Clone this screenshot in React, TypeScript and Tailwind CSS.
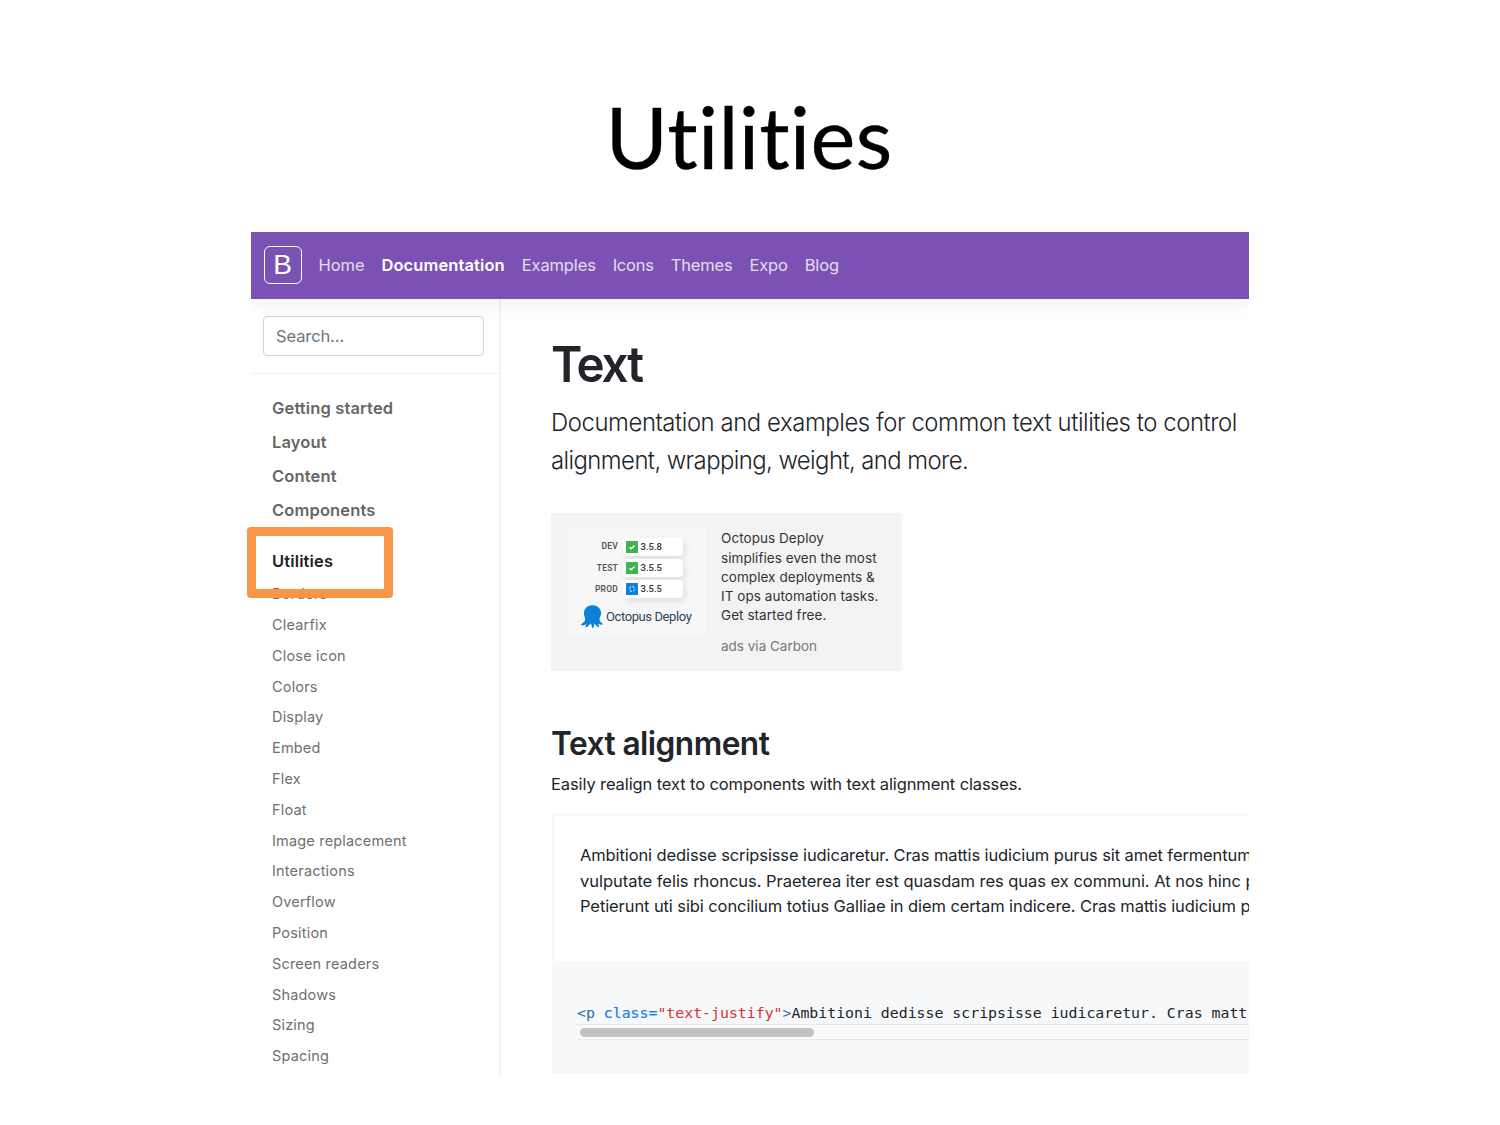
import React from "react";

const nav: [string, string][] = [
  ["Home", "text-white/80 tracking-[-0.060px]"],
  ["Documentation", "font-semibold text-white tracking-[0.100px]"],
  ["Examples", "text-white/80 tracking-[-0.135px]"],
  ["Icons", "text-white/80 tracking-[-0.240px]"],
  ["Themes", "text-white/80 tracking-[-0.135px]"],
  ["Expo", "text-white/80 tracking-[-0.200px]"],
  ["Blog", "text-white/80 tracking-[-0.080px]"],
];
const sections = ["Getting started", "Layout", "Content", "Components"];
const pages = [
  "Borders", "Clearfix", "Close icon", "Colors", "Display", "Embed", "Flex", "Float",
  "Image replacement", "Interactions", "Overflow", "Position", "Screen readers", "Shadows", "Sizing", "Spacing",
];

function Octopus() {
  return (
    <svg viewBox="0 0 22 23" className="h-[23px] w-[22px] shrink-0" fill="#0d80d8">
      <path d="M11.500 0.300C6.600 0.300 2.700 3.900 2.900 8.600c.1 2.300 1.300 4 1.200 6.200-.1 2.100-2.600 3.300-3.700 4.300-.6.6.1 1.400 1 1.300 1.500-.1 2.900-.8 3.900-1.500-.1 1-.6 1.700-1 2.400-.4.9.4 1.300 1.200.8 1.600-.9 3-2.600 4-3.700.9.900 1.200 2.200 1.500 3.700.2 1.100 1.500 1.200 1.800 0 .3-1.200.2-2.500.7-3.700 1 1.100 2 2.700 3.500 3.500.9.400 1.500-.2 1-1.100-.5-.8-.9-1.400-1-2.100 1.100.6 2.300 1.100 3.700 1 1-.1 1.200-.9.500-1.500-1.400-1.100-2.700-2.200-2.700-4 0-1.800 1.500-3.100 1.600-5.600C20.300 3.900 16.400.3 11.500.3Z" />
    </svg>
  );
}

function Release({ env, version, live }: { env: string; version: string; live?: boolean }) {
  return (
    <div className="flex h-[21.300px] items-center">
      <span className="w-[50.500px] text-right font-[Roboto] text-[8.500px] font-semibold tracking-[0.200px] text-[#555]">{env}</span>
      <div className="ml-[4.500px] flex h-[18px] w-[60px] items-center rounded-[4px] bg-white pl-[3px] shadow-[2px_3px_6px_rgba(0,0,0,0.1)]">
        {live ? (
          <svg viewBox="0 0 12 12" className="size-[12px]">
            <rect width="12" height="12" rx="0.500" fill="#0d80d8" />
            <circle cx="6" cy="6" r="2.500" fill="none" stroke="#fff" strokeWidth="0.900" strokeDasharray="2.600 1.300" />
          </svg>
        ) : (
          <svg viewBox="0 0 12 12" className="size-[12px]">
            <rect width="12" height="12" rx="0.500" fill="#3db44e" />
            <path d="M3.500 6.200 5.200 7.800 8.600 4.500" fill="none" stroke="#fff" strokeWidth="1.400" />
          </svg>
        )}
        <span className="ml-[3px] font-[Roboto] text-[9.500px] font-medium text-[#333]">{version}</span>
      </div>
    </div>
  );
}

export default function App() {
  return (
    <div className="relative h-[1125px] w-[1500px] overflow-hidden bg-white font-[Inter,sans-serif]">
      <h1 className="flex h-[232px] justify-center pr-[2px] pt-[81px] font-[Lato] text-[85px] leading-[110px] tracking-[0.150px] text-black [-webkit-text-stroke:0.300px_black] [font-variant-ligatures:none]">
        Utilities
      </h1>
      <div className="mx-auto flex h-[843px] w-[998px] flex-col overflow-hidden">
        <header className="z-10 flex h-[67px] shrink-0 items-center bg-[#7b52b3] pl-[12.500px] shadow-[0_8px_16px_rgba(0,0,0,0.05)]">
          <div className="mb-px flex size-[38px] items-center justify-center rounded-[6px] border border-white font-['Liberation_Sans'] text-[28px] leading-none text-white">B</div>
          <nav className="ml-[17px] flex gap-[16.950px] text-[16.500px]">
            {nav.map(([t, c]) => (
              <span key={t} className={c}>{t}</span>
            ))}
          </nav>
        </header>
        <div className="flex min-h-0 flex-1">
          <aside className="w-[250px] shrink-0 border-r-2 border-[#f2f2f2]">
            <div className="h-[75px] border-b border-[#f0f0f0] pl-[12px] pt-[17px]">
              <div className="flex h-[40px] w-[221px] items-center rounded-[4px] border border-[#ced4da] bg-white pl-[12px] text-[16.500px] tracking-[-0.110px] text-[#6c757d]">
                Search...
              </div>
            </div>
            <div className="pl-[21px] pt-[17px] text-[16.500px] font-semibold tracking-[0.140px] text-[#666]">
              {sections.map((t) => (
                <div key={t} className="flex h-[34px] items-center">{t}</div>
              ))}
              <div className="mt-[17px] flex h-[34px] items-center text-[#222]">Utilities</div>
            </div>
            <div className="pl-[21px] pt-[0.700px] text-[14.500px] tracking-[0.180px] text-[#6f6f6f]">
              {pages.map((t) => (
                <div key={t} className="flex h-[30.800px] items-center">{t}</div>
              ))}
            </div>
          </aside>
          <main className="min-w-0 flex-1 whitespace-nowrap pl-[50px] text-[#212529]">
            <h2 className="mt-[35px] h-[60px] w-fit origin-left scale-x-[0.950] text-[50px] font-semibold leading-[60px] tracking-[-2.200px]">Text</h2>
            <div className="mt-[9px] w-fit origin-left scale-x-[0.975] text-[24.500px] font-[350] leading-[38.300px] tracking-[-0.440px]">
              <div>Documentation and examples for common text utilities to control</div>
              <div className="tracking-[-0.590px]">alignment, wrapping, weight, and more.</div>
            </div>
            <div className="mt-[33px] flex h-[158px] w-[351px] rounded-[4px] bg-[#f3f3f3] pl-[16.500px] pt-[16px]">
              <div className="h-[105px] w-[138px] bg-[#f7f7f7] pt-[7.500px]">
                <Release env="DEV" version="3.5.8" />
                <Release env="TEST" version="3.5.5" />
                <Release env="PROD" version="3.5.5" live />
                <div className="ml-[13.500px] mt-[5px] flex items-center">
                  <Octopus />
                  <span className="ml-[3px] font-[Roboto] text-[13px] tracking-[-0.400px] text-[#2f4558]">Octopus Deploy</span>
                </div>
              </div>
              <div className="ml-[15.500px] pt-[0.900px] text-[13.500px] leading-[19.100px] tracking-[0.060px] text-[#333]">
                <div>Octopus Deploy</div>
                <div>simplifies even the most</div>
                <div>complex deployments &amp;</div>
                <div>IT ops automation tasks.</div>
                <div>Get started free.</div>
                <div className="mt-[12.500px] tracking-normal text-[#777]">ads via Carbon</div>
              </div>
            </div>
            <h3 className="mt-[52px] h-[40px] w-fit origin-left scale-x-[0.960] text-[33px] font-semibold leading-[40px] tracking-[-0.570px]">Text alignment</h3>
            <p className="mt-[8px] h-[26px] text-[16.500px] leading-[26px] tracking-[-0.110px]">Easily realign text to components with text alignment classes.</p>
            <div className="ml-px mt-[16px] h-[148px] border-l-[3px] border-t-[3px] border-[#f8f9fa] pl-[25px] pt-[27.500px] text-[16.500px] leading-[25.500px] tracking-[-0.110px]">
              <div>Ambitioni dedisse scripsisse iudicaretur. Cras mattis iudicium purus sit amet fermentum</div>
              <div className="tracking-[-0.035px]">vulputate felis rhoncus. Praeterea iter est quasdam res quas ex communi. At nos hinc p</div>
              <div className="tracking-[-0.095px]">Petierunt uti sibi concilium totius Galliae in diem certam indicere. Cras mattis iudicium p</div>
            </div>
            <div className="ml-px h-[112.500px] bg-[#f7f8fa] pl-[25px] pt-[40px] font-['DejaVu_Sans_Mono'] text-[14.850px]">
              <div className="h-[23px] overflow-hidden leading-[24px]"><span className="text-[#2f6f9f]">&lt;p</span> <span className="text-[#1a7df0] [-webkit-text-stroke:0.200px_#1a7df0]">class=</span><span className="text-[#d73038]">"text-justify"</span><span className="text-[#2f6f9f]">&gt;</span>Ambitioni dedisse scripsisse iudicaretur. Cras matt</div>
              <div className="flex h-[16px] items-center border-y border-[#e8e8e8] bg-[#fafafa] pl-[3px] pt-px"><div className="h-[9px] w-[234px] rounded-full bg-[#c1c1c1]" /></div>
            </div>
          </main>
        </div>
      </div>
      <div className="absolute left-[247px] top-[527px] h-[71px] w-[146px] rounded-[4px] border-[9px] border-[#f79646]" />
    </div>
  );
}
